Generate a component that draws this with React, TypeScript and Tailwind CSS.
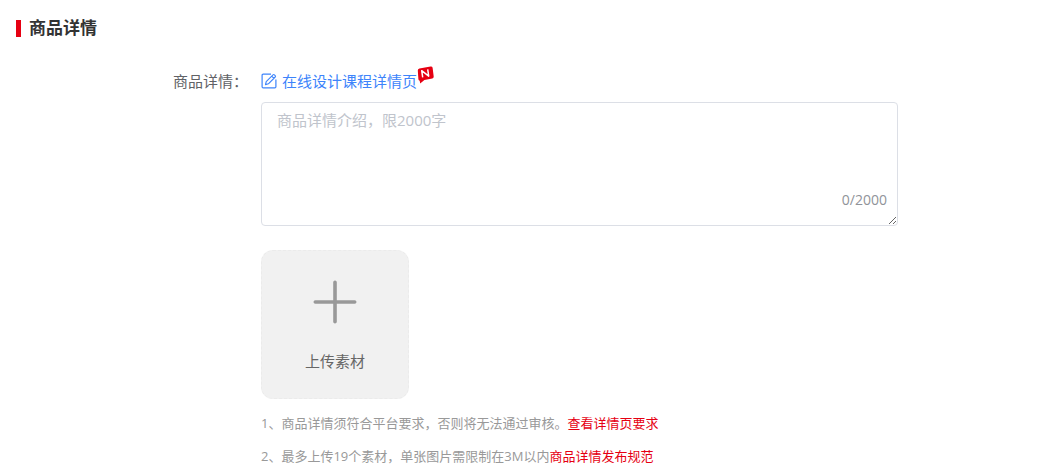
import { useState } from "react"

const MAX_LENGTH = 2000

function EditIcon() {
  return (
    <svg className="size-4 shrink-0" viewBox="0 0 16 16" fill="none" stroke="currentColor" aria-hidden="true">
      <path d="M10 1.1H2.2Q1.1 1.1 1.1 2.2V13.8Q1.1 14.9 2.2 14.9H13.8Q14.9 14.9 14.9 13.8V6.5" strokeWidth="1.2" />
      <path d="M5.2 8.6 12 1.8Q12.7 1.1 13.4 1.8L14.2 2.6Q14.9 3.3 14.2 4L7.4 10.8 4.5 11.6ZM10.7 3.1 12.9 5.3" strokeWidth="1.1" strokeLinejoin="round" />
    </svg>
  )
}

function NewBadge() {
  return (
    <svg className="h-[18px] w-[17px] shrink-0 -mt-3" viewBox="0 0 17 18" aria-hidden="true">
      <path d="M2.4 2.4 13.6.4Q15.3.2 15.6 1.8L16.7 10.6Q16.9 12.2 15.3 12.5L7.4 14 3.2 17.6 2.7 14.8Q1.6 14.6 1.4 13.2L.8 4.4Q.7 2.7 2.4 2.4Z" fill="#e60012" />
      <path d="M5.7 11.4 4.7 4.7 11.7 10.1 10.7 3.4" fill="none" stroke="#fff" strokeWidth="1.5" strokeLinejoin="round" />
    </svg>
  )
}

function PlusIcon() {
  return (
    <svg className="size-11" viewBox="0 0 44 44" fill="none" stroke="#999" strokeWidth="3.6" strokeLinecap="round" aria-hidden="true">
      <path d="M22 2.3v39.4M2.3 22h39.4" />
    </svg>
  )
}

export default function App() {
  const [detail, setDetail] = useState("")

  return (
    <section className="bg-white pt-4 pb-2 text-[15px] text-[#606266] font-['Open_Sans','Noto_Sans_CJK_SC',sans-serif]">
      <header className="flex items-center px-4 h-6">
        <span className="mr-2 h-[17px] w-[5px] bg-[#e60012]" />
        <h2 className="text-[17px] leading-6 font-bold text-[#333]">商品详情</h2>
      </header>

      <div className="mt-7 flex pr-[161px]">
        <label htmlFor="detail" className="mr-[13px] w-[248px] shrink-0 text-right leading-[26px]">
          商品详情：
        </label>

        <div className="min-w-0 flex-1">
          <a href="#design" className="flex h-[26px] w-fit items-center text-[#3d84fb]">
            <EditIcon />
            <span className="ml-[5px] leading-[26px]">在线设计课程详情页</span>
            <NewBadge />
          </a>

          <div className="relative mt-2">
            <textarea
              id="detail"
              rows={5}
              maxLength={MAX_LENGTH}
              value={detail}
              onChange={(e) => setDetail(e.target.value)}
              placeholder="商品详情介绍，限2000字"
              className="block w-full resize-y rounded border border-[#dcdfe6] px-[15px] py-1.5 leading-[22px] outline-none placeholder:text-[#c0c4cc] focus:border-[#3d84fb]"
            />
            <span className="pointer-events-none absolute right-[11px] bottom-4 text-[14px] leading-5 text-[#909399]">
              {detail.length}/{MAX_LENGTH}
            </span>
          </div>

          <button
            type="button"
            className="mt-6 flex h-[149px] w-[148px] flex-col items-center justify-center gap-[25px] rounded-xl border border-dashed border-[#ebebeb] bg-[#f1f1f1] pt-1 text-[#666]"
          >
            <PlusIcon />
            <span className="leading-6">上传素材</span>
          </button>

          <ol className="mt-2 text-[13px] leading-[33px] text-[#999]">
            <li>
              1、商品详情须符合平台要求，否则将无法通过审核。
              <a href="#requirements" className="text-[#e60012]">查看详情页要求</a>
            </li>
            <li>
              2、最多上传19个素材，单张图片需限制在3M以内
              <a href="#rules" className="text-[#e60012]">商品详情发布规范</a>
            </li>
          </ol>
        </div>
      </div>
    </section>
  )
}
